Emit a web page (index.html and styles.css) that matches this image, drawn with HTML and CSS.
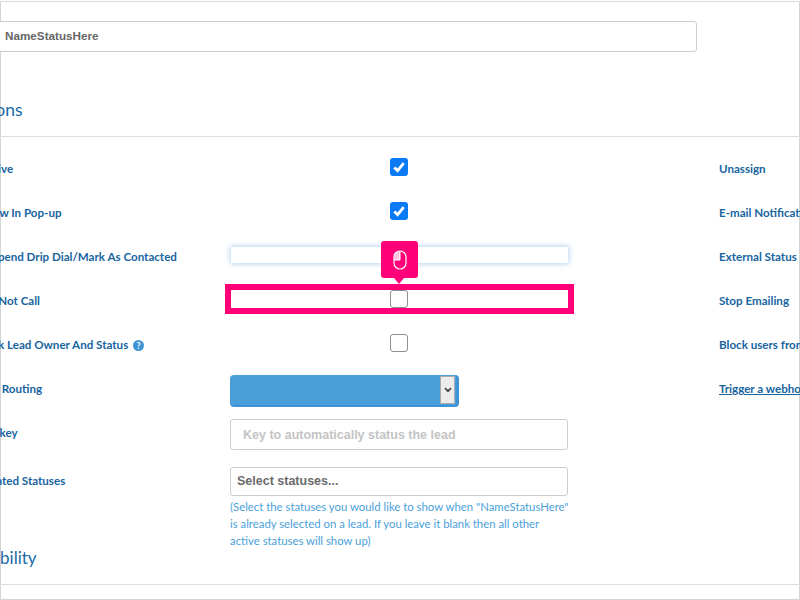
FILE: index.html
```html
<!DOCTYPE html>
<html lang="en">
<head>
<meta charset="utf-8">
<title>Status settings</title>
<link rel="stylesheet" href="styles.css">
</head>
<body>
<div class="frame">
  <div class="content">
    <div class="name-wrap"><div class="field name-field">NameStatusHere</div></div>
    <h2 class="heading options">Options</h2>
    <div class="rows">
      <div class="row">
        <div class="label">Active</div>
        <div class="control"><span class="check on"><svg viewBox="0 0 18 18" width="18" height="18"><path d="M4.3 9.4 7.6 12.6 13.7 5.2" fill="none" stroke="#fff" stroke-width="2.8"/></svg></span></div>
        <div class="label right">Unassign</div>
      </div>
      <div class="row">
        <div class="label">Show In Pop-up</div>
        <div class="control"><span class="check on"><svg viewBox="0 0 18 18" width="18" height="18"><path d="M4.3 9.4 7.6 12.6 13.7 5.2" fill="none" stroke="#fff" stroke-width="2.8"/></svg></span></div>
        <div class="label right">E-mail Notifications</div>
      </div>
      <div class="row">
        <div class="label">Suspend Drip Dial/Mark As Contacted</div>
        <div class="control"><div class="ghost"></div></div>
        <div class="label right">External Status</div>
      </div>
      <div class="row">
        <div class="label">Do Not Call</div>
        <div class="control highlight">
          <span class="check"></span>
          <div class="tip">
            <svg viewBox="0 0 14 20" width="14" height="20"><path d="M7 1.5A5.5 5.5 0 0 0 1.5 7V10H7Z" fill="#ffc4e2"/><rect x="1" y="1" width="12" height="18" rx="6" fill="none" stroke="#fff" stroke-width="1.2"/><path d="M7 1V10H1" fill="none" stroke="#fff" stroke-width="1"/></svg>
          </div>
        </div>
        <div class="label right">Stop Emailing</div>
      </div>
      <div class="row">
        <div class="label">Lock Lead Owner And Status <span class="help">?</span></div>
        <div class="control"><span class="check"></span></div>
        <div class="label right">Block users from</div>
      </div>
      <div class="row">
        <div class="label">IVR Routing</div>
        <div class="control">
          <div class="dropdown"><span class="arrow"><svg viewBox="0 0 8 6" width="8" height="6"><path d="M1 1.2 4 4.2 7 1.2" fill="none" stroke="#444" stroke-width="1.7"/></svg></span></div>
        </div>
        <div class="label right link">Trigger a webhook</div>
      </div>
      <div class="row tall">
        <div class="label">Hotkey</div>
        <div class="control"><div class="field key">Key to automatically status the lead</div></div>
      </div>
      <div class="row">
        <div class="label">Related Statuses</div>
        <div class="control">
          <div class="field statuses">Select statuses...</div>
          <p class="hint">(Select the statuses you would like to show when "NameStatusHere"<br>is already selected on a lead. If you leave it blank then all other<br>active statuses will show up)</p>
        </div>
      </div>
    </div>
    <h2 class="heading visibility">Visibility</h2>
  </div>
</div>
</body>
</html>
```

FILE: styles.css
```css
html, body {
  margin: 0;
  padding: 0;
  background: #fff;
}
.frame {
  box-sizing: border-box;
  width: 800px;
  height: 600px;
  overflow: hidden;
  border-top: 1px solid #fff;
  box-shadow: inset 1px 0 0 #d4d4d4, inset -1px 0 0 #d4d4d4, inset 0 -1px 0 #d4d4d4;
  font-family: "Lato", "Liberation Sans", sans-serif;
}
.content {
  margin-left: -20px;
  width: 900px;
  border-top: 1px solid #d8d8d8;
  padding-top: 19px;
}
.name-wrap {
  width: 717px;
}
.field {
  box-sizing: border-box;
  border: 1px solid #ccc;
  border-radius: 3px;
  background: #fff;
  font-family: "Liberation Sans", Arial, sans-serif;
  font-weight: 700;
  font-size: 12.5px;
  color: #666;
}
.name-field {
  height: 31px;
  line-height: 28px;
  padding-left: 24px;
  font-size: 11.7px;
}
.heading {
  margin: 0;
  font-weight: 400;
  line-height: 20px;
  color: #1a6aa6;
}
.options {
  margin-top: 48px;
  font-size: 17.5px;
  text-indent: -19px;
  padding-bottom: 16px;
  border-bottom: 1px solid #ddd;
}
.rows {
  padding-top: 10px;
}
.row {
  display: grid;
  grid-template-columns: 250px 338px 1fr;
  min-height: 44px;
}
.row.tall {
  min-height: 48px;
}
.label {
  padding-top: 14px;
  font-size: 11.6px;
  line-height: 16px;
  font-weight: 700;
  color: #17649f;
  white-space: nowrap;
}
.label.right {
  padding-left: 151px;
}
.link {
  text-decoration: underline;
}
.control {
  position: relative;
  align-self: start;
  margin-top: 11px;
  text-align: center;
  line-height: 0;
}
.check {
  display: inline-block;
  box-sizing: border-box;
  width: 18px;
  height: 18px;
  border: 1px solid #8f8f8f;
  border-radius: 3px;
  background: #fff;
}
.check.on {
  border: 0;
  background: #0b7bf5;
}
.ghost {
  height: 16px;
  margin: 1px 0 0 1px;
  background: #fff;
  box-shadow: 0 0 5px 1px rgba(74, 144, 217, .4);
}
.highlight {
  height: 18px;
  margin-left: 1px;
  background: #fff;
  outline: 6px solid #ff0078;
}
.highlight .check {
  margin-right: 1px;
}
.tip {
  position: absolute;
  left: 150px;
  top: -49px;
  width: 37px;
  height: 37px;
  display: flex;
  align-items: center;
  justify-content: center;
  background: #ff0078;
  border-radius: 3px;
}
.tip::after {
  content: "";
  position: absolute;
  left: 13px;
  top: 37px;
  border-style: solid;
  border-width: 6px 5px 0;
  border-color: #ff0078 transparent transparent;
}
.help {
  display: inline-block;
  width: 11px;
  height: 11px;
  margin-left: 2px;
  border-radius: 50%;
  background: #3f94d6;
  color: #fff;
  font-size: 9px;
  line-height: 11px;
  text-align: center;
}
.dropdown {
  position: relative;
  box-sizing: border-box;
  width: 229px;
  height: 32px;
  margin-top: -3px;
  background: #4a9fd9;
  border-radius: 4px;
  border-bottom: 2px solid #3e93d6;
  border-right: 3px solid #3e93d6;
}
.arrow {
  position: absolute;
  right: 1px;
  top: 1px;
  box-sizing: border-box;
  width: 15px;
  height: 28px;
  display: flex;
  align-items: center;
  justify-content: center;
  background: #ececec;
  border: 1px solid #aaa;
}
.key {
  height: 31px;
  margin-top: -3px;
  line-height: 30px;
  padding-left: 12px;
  text-align: left;
  color: #c4c4c4;
}
.statuses {
  height: 29px;
  margin-top: -3px;
  line-height: 27px;
  padding-left: 6px;
  text-align: left;
  color: #6b6b6b;
}
.hint {
  margin: 2px 0 0;
  font-size: 11.35px;
  line-height: 17px;
  color: #4a9fd9;
  text-align: left;
  white-space: nowrap;
}
.visibility {
  margin-top: -1px;
  font-size: 17px;
  text-indent: -7px;
  padding-bottom: 16px;
  border-bottom: 1px solid #ddd;
}
```
